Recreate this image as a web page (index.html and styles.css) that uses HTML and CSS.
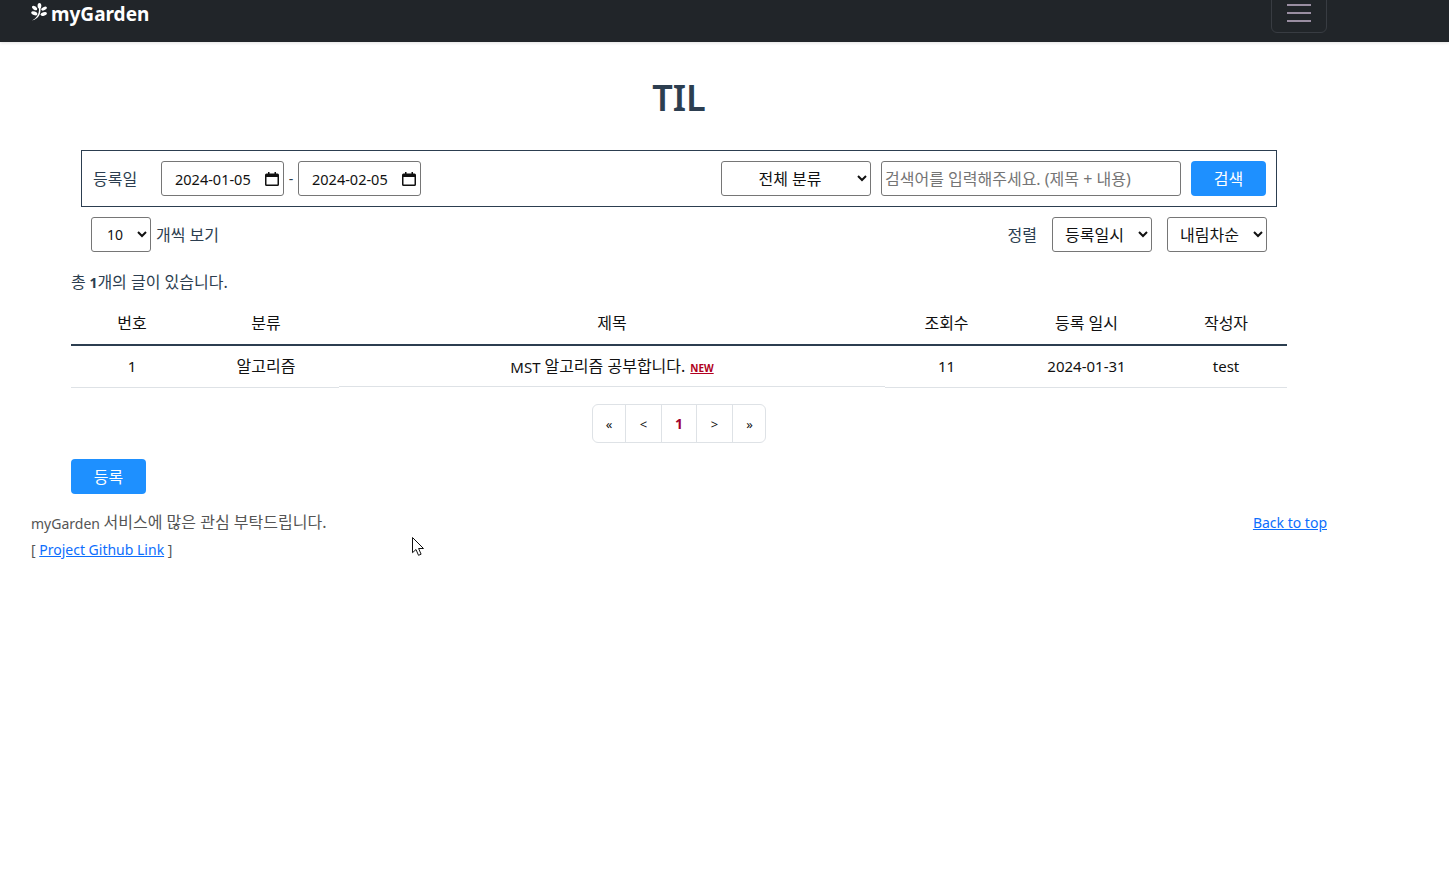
FILE: index.html
```html
<!DOCTYPE html>
<html lang="ko">
<head>
<meta charset="utf-8">
<title>TIL</title>
<link rel="stylesheet" href="styles.css">
</head>
<body>
<nav class="navbar">
  <a class="brand" href="#">
    <svg class="brand-icon" viewBox="0 0 16 20" width="16" height="20" aria-hidden="true">
      <g fill="#fff">
        <ellipse cx="8.500" cy="2.800" rx="1.900" ry="2.800"/>
        <ellipse cx="3.600" cy="5" rx="3" ry="1.700" transform="rotate(35 3.600 5)"/>
        <ellipse cx="13" cy="5.600" rx="3" ry="1.600" transform="rotate(-25 13 5.600)"/>
        <ellipse cx="3.300" cy="10.300" rx="3.200" ry="1.800" transform="rotate(20 3.300 10.300)"/>
        <ellipse cx="12.700" cy="11" rx="3.300" ry="1.700" transform="rotate(-15 12.700 11)"/>
        <path d="M8 5h1.500c.4 5.500-1.500 10.700-8.500 12.600 4.800-2.600 7.300-6.500 7-12.600z"/>
      </g>
    </svg>
    <span>myGarden</span>
  </a>
  <button class="toggler" type="button" aria-label="메뉴"><span class="bar"></span><span class="bar"></span><span class="bar"></span></button>
</nav>

<main class="container">
  <h1 class="title">TIL</h1>

  <form class="search-box">
    <label class="date-label ko lift">등록일</label>
    <div class="field date"><span>2024-01-05</span>
      <svg class="cal" width="14" height="14" viewBox="0 0 14 14" aria-hidden="true"><path fill="#111" d="M3 0h1.500v1.500h5V0H11v1.500h1.500A1.500 1.500 0 0 1 14 3v9.500a1.500 1.500 0 0 1-1.500 1.500h-11A1.500 1.500 0 0 1 0 12.500V3a1.500 1.500 0 0 1 1.500-1.500H3zM1.500 5v7.500h11V5z"/></svg>
    </div>
    <span class="dash">-</span>
    <div class="field date"><span>2024-02-05</span>
      <svg class="cal" width="14" height="14" viewBox="0 0 14 14" aria-hidden="true"><path fill="#111" d="M3 0h1.500v1.500h5V0H11v1.500h1.500A1.500 1.500 0 0 1 14 3v9.500a1.500 1.500 0 0 1-1.500 1.500h-11A1.500 1.500 0 0 1 0 12.500V3a1.500 1.500 0 0 1 1.500-1.500H3zM1.500 5v7.500h11V5z"/></svg>
    </div>
    <select class="field category"><option>전체 분류</option></select>
    <input class="field keyword" type="text" placeholder="검색어를 입력해주세요. (제목 + 내용)">
    <button class="btn btn-search" type="button">검색</button>
  </form>

  <div class="options">
    <select class="field size"><option>10</option></select>
    <span class="size-label ko lift">개씩 보기</span>
    <span class="sort-label ko lift">정렬</span>
    <select class="field sort-key"><option>등록일시</option></select>
    <select class="field sort-dir"><option>내림차순</option></select>
  </div>

  <p class="count"><span class="ko">총</span> <b>1</b><span class="ko">개의 글이 있습니다.</span></p>

  <table class="board">
    <colgroup>
      <col class="c1"><col class="c2"><col class="c3"><col class="c4"><col class="c5"><col class="c6">
    </colgroup>
    <thead>
      <tr><th>번호</th><th>분류</th><th>제목</th><th>조회수</th><th>등록 일시</th><th>작성자</th></tr>
    </thead>
    <tbody>
      <tr>
        <td>1</td><td class="ko cat-cell">알고리즘</td>
        <td class="subject">MST <span class="ko raise">알고리즘 공부합니다.</span> <span class="new">NEW</span></td>
        <td>11</td><td>2024-01-31</td><td>test</td>
      </tr>
    </tbody>
  </table>

  <ul class="pagination">
    <li>«</li><li class="p-prev">&lt;</li><li class="current">1</li><li class="p-next">&gt;</li><li>»</li>
  </ul>

  <button class="btn btn-write" type="button">등록</button>
</main>

<footer class="footer">
  <div class="foot-left">
    <p class="foot-line">myGarden <span class="ko raise">서비스에 많은 관심 부탁드립니다.</span></p>
    <p class="foot-line2">[ <a href="#">Project Github Link</a> ]</p>
  </div>
  <a class="top-link" href="#">Back to top</a>
</footer>

<svg class="cursor" width="14" height="20" viewBox="0 0 14 20" aria-hidden="true"><path fill="#fff" stroke="#111" stroke-width="1" d="M.5.5v15.200l3.500-3.200 2.500 5.800 2.600-1.100-2.500-5.700h4.900z"/></svg>
</body>
</html>
```
FILE: styles.css
```css
* { box-sizing: border-box; }
html, body { margin: 0; padding: 0; background: #fff; }
body {
  height: 870px;
  overflow: hidden;
  font-family: "Noto Sans", "Noto Sans CJK KR", sans-serif;
  font-size: 14px;
  color: #2c3e50;
  position: relative;
}
.ko { font-size: 16px; }
.lift { padding-bottom: 2px; }
.raise { vertical-align: 1px; }
.navbar {
  height: 42px;
  background: #212529;
  box-shadow: 0 1px 3px rgba(0,0,0,.12);
  padding: 0 122px 9px 31px;
  display: flex;
  justify-content: space-between;
  align-items: flex-end;
  overflow: hidden;
}
.brand {
  display: flex;
  align-items: center;
  gap: 4px;
  align-self: flex-start;
  color: #fff;
  font-weight: 700;
  font-size: 19px;
  line-height: 28px;
  text-decoration: none;
}
.brand-icon { margin-top: -2px; }
.toggler {
  width: 56px;
  height: 50px;
  flex: none;
  background: transparent;
  border: 1px solid #383c42;
  border-radius: 6px;
  padding: 0 0 10px;
  display: flex;
  flex-direction: column;
  align-items: center;
  justify-content: flex-end;
  gap: 6px;
}
.bar { display: block; width: 24px; height: 2px; background: #9a8ea2; }
.container { width: 1216px; margin-left: 71px; }
.title {
  margin: 0;
  padding-top: 34px;
  text-align: center;
  font-size: 36px;
  line-height: 44px;
  font-weight: 600;
  color: #2c3e50;
  height: 108px;
}
.search-box {
  margin-left: 10px;
  width: 1196px;
  height: 57px;
  border: 1px solid #2c3e50;
  padding: 0 10px 0 11px;
  display: flex;
  align-items: center;
}
.date-label { width: 68px; flex: none; }
.field {
  height: 35px;
  border: 1px solid #767676;
  border-radius: 3px;
  background: #fff;
  color: #111;
  font-family: inherit;
  font-size: 16px;
  padding: 0;
}
.date {
  width: 123px;
  padding: 0 4px 0 13px;
  flex: none;
  display: flex;
  align-items: center;
  justify-content: space-between;
  font-size: 14.500px;
}
.cal { flex: none; }
.dash { width: 14px; text-align: center; flex: none; }
.category { width: 150px; margin-left: auto; text-align: center; flex: none; }
.keyword { width: 300px; margin-left: 10px; padding: 0 3px; flex: none; }
.keyword::placeholder { color: #757575; opacity: 1; }
.btn {
  height: 35px;
  width: 75px;
  border: 0;
  border-radius: 4px;
  background: #1e90ff;
  color: #fff;
  font-family: inherit;
  font-size: 16px;
  padding: 0 0 2px;
}
.btn-search { margin-left: 10px; flex: none; }
.options {
  margin: 10px 20px 0 20px;
  height: 35px;
  display: flex;
  align-items: center;
}
.size { width: 60px; padding-left: 11px; font-size: 14px; }
.size-label { margin-left: 5px; }
.sort-label { margin-left: auto; }
.sort-key { width: 100px; margin-left: 15px; padding-left: 8px; }
.sort-dir { width: 100px; margin-left: 15px; padding-left: 8px; }
.count { margin: 20px 0 0; height: 20px; line-height: 20px; }
.board {
  width: 1216px;
  margin-top: 11px;
  border-collapse: separate;
  border-spacing: 0;
  table-layout: fixed;
  color: #111;
}
.c1 { width: 122px; }
.c2 { width: 146px; }
.c3 { width: 546px; }
.c4 { width: 123px; }
.c5 { width: 157px; }
.c6 { width: 122px; }
th {
  height: 43px;
  font-weight: 400;
  font-size: 16px;
  border-bottom: 2px solid #2c3e50;
  vertical-align: middle;
  padding: 0 0 3px;
}
td {
  height: 42px;
  text-align: center;
  font-size: 15px;
  border-bottom: 1px solid #dee2e6;
  padding: 0 0 2px;
}
td.cat-cell { font-size: 16px; padding-bottom: 4px; }
td.subject {
  padding-bottom: 4px;
  border-bottom-color: transparent;
  box-shadow: inset 0 -1px 0 #dee2e6;
}
.new {
  color: #b00020;
  font-size: 10px;
  font-weight: 700;
  text-decoration: underline;
  vertical-align: 1px;
  margin-left: 1px;
}
.pagination {
  list-style: none;
  margin: 16px 0 0 521px;
  padding: 0;
  width: 174px;
  height: 39px;
  display: flex;
  border: 1px solid #dee2e6;
  border-radius: 6px;
  font-size: 13px;
  color: #111;
}
.pagination li {
  flex: 0 0 34px;
  display: flex;
  align-items: center;
  justify-content: center;
  border-left: 1px solid #dee2e6;
}
.pagination li:first-child { border-left: 0; flex-basis: 32px; }
.pagination .p-prev { flex-basis: 36px; }
.pagination .current { flex-basis: 35px; color: #a00030; font-weight: 700; font-size: 14px; }
.pagination .p-next { flex-basis: 36px; }
.btn-write { display: block; margin-top: 16px; }
.footer {
  margin: 16px 122px 0 31px;
  display: flex;
  justify-content: space-between;
  color: #555;
}
.foot-left { width: 400px; }
.foot-line { margin: 0; line-height: 24px; }
.foot-line2 { margin: 2px 0 0; line-height: 24px; }
.footer a { color: #0d6efd; }
.top-link { line-height: 24px; margin-top: 1px; }
.cursor { position: absolute; left: 412px; top: 537px; }
```
